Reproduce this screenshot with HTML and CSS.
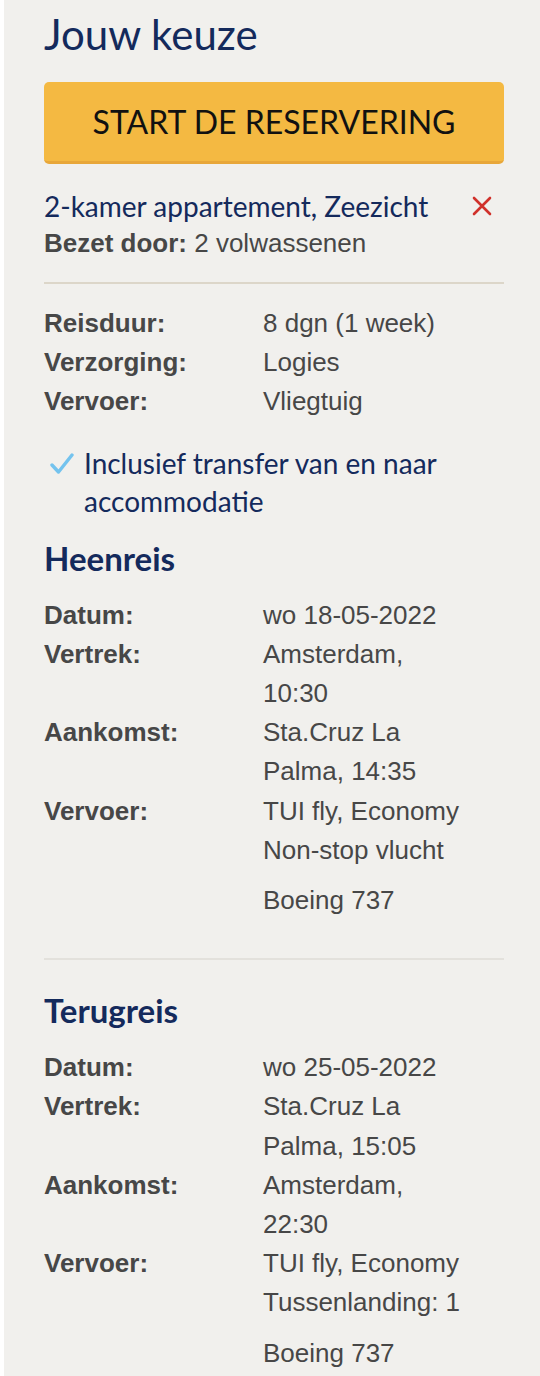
FILE: index.html
```html
<!DOCTYPE html>
<html lang="nl">
<head>
<meta charset="utf-8">
<title>Jouw keuze</title>
<link rel="stylesheet" href="styles.css">
</head>
<body>
<div class="panel">
  <h1 class="title">Jouw keuze</h1>
  <button class="cta" type="button">START DE RESERVERING</button>

  <div class="room">
    <div class="room-head">
      <span class="room-name">2-kamer appartement, Zeezicht</span>
      <svg class="remove" viewBox="0 0 20 20" width="20" height="20" aria-label="verwijderen">
        <path d="M2 2 L18 18 M18 2 L2 18" stroke="#d0312b" stroke-width="2.6" stroke-linecap="round" fill="none"/>
      </svg>
    </div>
    <div class="occ"><b>Bezet door:</b> 2 volwassenen</div>
  </div>

  <hr class="rule">

  <dl class="facts">
    <dt>Reisduur:</dt><dd>8 dgn (1 week)</dd>
    <dt>Verzorging:</dt><dd>Logies</dd>
    <dt>Vervoer:</dt><dd>Vliegtuig</dd>
  </dl>

  <div class="incl">
    <svg class="check" viewBox="0 0 24 22" width="24" height="22" aria-hidden="true">
      <path d="M2 12 L8.5 19 L22 2" stroke="#74c3ee" stroke-width="3.4" stroke-linecap="round" stroke-linejoin="round" fill="none"/>
    </svg>
    <span class="incl-text">Inclusief transfer van en naar accommodatie</span>
  </div>

  <section class="leg">
    <h2 class="leg-title">Heenreis</h2>
    <dl class="facts">
      <dt>Datum:</dt><dd>wo 18-05-2022</dd>
      <dt>Vertrek:</dt><dd>Amsterdam, 10:30</dd>
      <dt>Aankomst:</dt><dd>Sta.Cruz La Palma, 14:35</dd>
      <dt>Vervoer:</dt><dd>TUI fly, Economy<br>Non-stop vlucht<span class="plane">Boeing 737</span></dd>
    </dl>
  </section>

  <hr class="rule light">

  <section class="leg leg-return">
    <h2 class="leg-title">Terugreis</h2>
    <dl class="facts">
      <dt>Datum:</dt><dd>wo 25-05-2022</dd>
      <dt>Vertrek:</dt><dd>Sta.Cruz La Palma, 15:05</dd>
      <dt>Aankomst:</dt><dd>Amsterdam, 22:30</dd>
      <dt>Vervoer:</dt><dd>TUI fly, Economy<br>Tussenlanding: 1<span class="plane">Boeing 737</span></dd>
    </dl>
  </section>
</div>
</body>
</html>
```

FILE: styles.css
```css
* { box-sizing: border-box; }

html, body {
  margin: 0;
  padding: 0;
  background: #ffffff;
}

.panel {
  margin-left: 4px;
  min-height: 1376px;
  background: #f1f0ed;
  padding: 8px 36px 0 40px;
  font-family: "Liberation Sans", Arial, sans-serif;
  color: #474747;
}

.title {
  margin: 0;
  font-family: Lato, "Open Sans", sans-serif;
  font-weight: 400;
  font-size: 42px;
  line-height: 52px;
  color: #142a5c;
}

.cta {
  display: block;
  width: 100%;
  height: 82px;
  margin: 22px 0 0;
  padding: 0;
  border: 0;
  border-bottom: 3px solid #e8a73a;
  border-radius: 5px;
  background: #f4b942;
  font-family: Lato, "Open Sans", sans-serif;
  font-size: 32px;
  font-weight: 400;
  color: #111111;
  text-align: center;
}

.room {
  margin-top: 24px;
}

.room-head {
  display: flex;
  align-items: center;
  justify-content: space-between;
}

.room-name {
  font-family: Lato, "Open Sans", sans-serif;
  font-size: 28px;
  line-height: 36px;
  color: #142a5c;
}

.remove {
  margin-right: 12px;
}

.occ {
  font-size: 26px;
  line-height: 38px;
}

.occ b { font-weight: 700; }

.rule {
  margin: 20px 0 0;
  border: 0;
  height: 2px;
  background: #dcd6c9;
}

.rule.light {
  background: #e3e1dc;
  margin-top: 38px;
}

.facts {
  display: grid;
  grid-template-columns: 219px 204px;
  margin: 20px 0 0;
  font-size: 26px;
  line-height: 39.2px;
}

.facts dt {
  font-weight: 700;
}

.facts dd {
  margin: 0;
}

.plane {
  display: block;
  margin-top: 11px;
}

.incl {
  display: flex;
  align-items: flex-start;
  margin-top: 22px;
  padding-left: 6px;
}

.check {
  flex: none;
  margin-top: 9px;
  margin-right: 10px;
}

.incl-text {
  font-family: Lato, "Open Sans", sans-serif;
  font-size: 28px;
  line-height: 38px;
  color: #142a5c;
}

.leg-title {
  margin: 18px 0 0;
  font-family: Lato, "Open Sans", sans-serif;
  font-weight: 700;
  font-size: 33px;
  line-height: 40px;
  color: #142a5c;
}

.leg-return .leg-title {
  margin-top: 30px;
}

.leg .facts {
  margin-top: 18px;
}
```
